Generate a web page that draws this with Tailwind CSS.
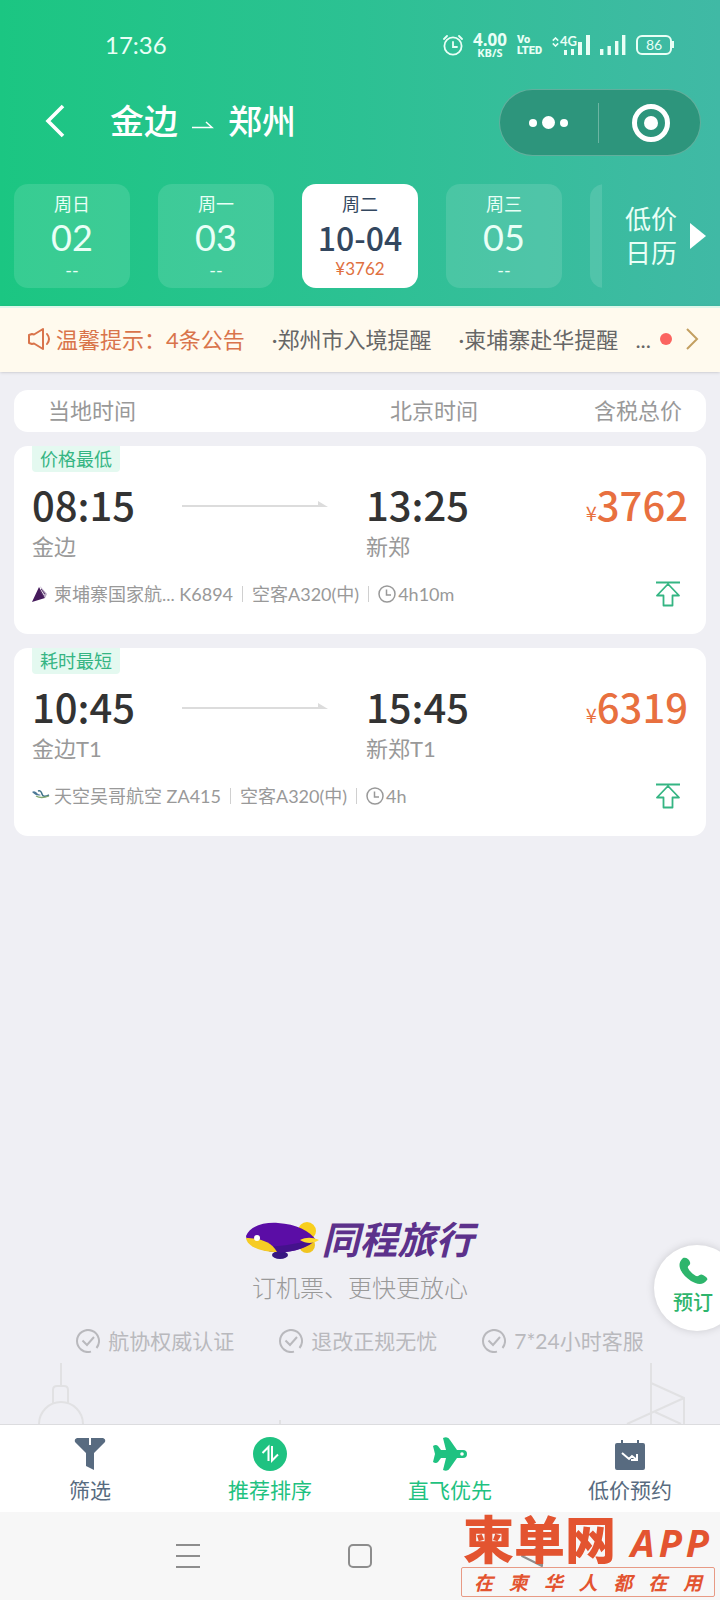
<!DOCTYPE html>
<html lang="zh-CN">
<head>
  <meta charset="UTF-8">
  <meta name="viewport" content="width=device-width, initial-scale=1.0">
  <title>金边 - 郑州</title>
  <script src="https://cdn.jsdelivr.net/npm/@tailwindcss/browser@4"></script>
</head>
<body class="relative flex min-h-screen flex-col overflow-x-hidden bg-[#efeff4] font-['Lato','Noto_Sans_CJK_SC',sans-serif] text-[#999]">

  <!-- Header -->
  <header class="bg-linear-to-r from-[#1bc682] via-[#2cc193] to-[#40b9a5] pb-[18px] text-[#e9fff6]">
    <!-- Status bar -->
    <div class="flex h-[89px] items-center justify-between pr-[46px] pl-[105px]">
      <span class="text-[24px]">17:36</span>
      <div class="flex items-center gap-[10px]">
        <svg class="h-6 w-5" viewBox="0 0 20 24" fill="none" stroke="currentColor" stroke-width="1.8" stroke-linecap="round">
          <circle cx="10" cy="13" r="8.6"/>
          <path d="M10 9v5h4M1 6l3-3M19 6l-3-3"/>
        </svg>
        <div class="flex flex-col items-center font-['Open_Sans',sans-serif] font-bold">
          <span class="text-[17px] leading-[15px]">4.00</span>
          <span class="text-[11px] leading-[11px]">KB/S</span>
        </div>
        <div class="flex flex-col font-['Roboto',sans-serif] text-[11px] leading-[11px] font-black">
          <span>Vo</span>
          <span>LTED</span>
        </div>
        <div class="flex items-start">
          <svg class="mt-[2px] h-[10px] w-[7px]" viewBox="0 0 7 10" fill="none" stroke="currentColor" stroke-width="1.6">
            <path d="M.8 3.6 3.5 1l2.7 2.6M.8 6.4 3.5 9l2.7-2.6"/>
          </svg>
          <div class="relative">
            <span class="absolute -top-[1px] left-[1px] text-[13px] leading-[14px] font-bold">4G</span>
            <svg class="h-5 w-[31px]" viewBox="0 0 31 20" fill="currentColor">
              <rect x="5" y="15" width="3" height="5"/><rect x="12" y="14" width="3" height="6"/><rect x="19" y="7" width="4" height="13"/><rect x="27" y="0" width="4" height="20"/>
            </svg>
          </div>
        </div>
        <svg class="h-5 w-[26px]" viewBox="0 0 26 20" fill="currentColor">
          <rect x="0" y="14" width="3.4" height="6"/><rect x="7.5" y="11" width="3.4" height="9"/><rect x="15" y="6" width="3.4" height="14"/><rect x="22" y="0" width="3.4" height="20"/>
        </svg>
        <div class="flex items-center">
          <span class="flex h-5 w-9 items-center justify-center rounded-[6px] border-2 border-[#e9fff6] text-[14px] leading-none">86</span>
          <span class="h-[7px] w-[2px] bg-[#e9fff6]"></span>
        </div>
      </div>
    </div>

    <!-- Title bar -->
    <div class="flex h-[67px] items-center justify-between pr-[19px] pl-[45px]">
      <div class="flex items-center pb-1">
        <button class="mr-[45px]" aria-label="返回">
          <svg class="h-[34px] w-5" viewBox="0 0 20 34" fill="none" stroke="white" stroke-width="3.6"><path d="M18 2 3 17 18 32"/></svg>
        </button>
        <h1 class="flex items-center gap-[14px] text-[34px] leading-[50px] font-medium text-white">
          <span>金边</span>
          <svg class="mt-2 h-2 w-[22px]" viewBox="0 0 22 8" fill="none" stroke="currentColor" stroke-width="1.5"><path d="M0 6.500h20L14 1"/></svg>
          <span>郑州</span>
        </h1>
      </div>
      <div class="flex h-[67px] w-[202px] items-center rounded-full border border-white/25 bg-[#2d957c]">
        <button class="flex flex-1 items-center justify-center gap-[5px]" aria-label="更多">
          <span class="size-[8px] rounded-full bg-white"></span>
          <span class="size-[13px] rounded-full bg-white"></span>
          <span class="size-[8px] rounded-full bg-white"></span>
        </button>
        <span class="h-10 w-px bg-white/30"></span>
        <button class="flex flex-1 items-center justify-center pl-1" aria-label="关闭">
          <span class="flex size-[38px] items-center justify-center rounded-full border-[5px] border-white">
            <span class="size-[14px] rounded-full bg-white"></span>
          </span>
        </button>
      </div>
    </div>

    <!-- Dates -->
    <div class="mt-7 flex items-center justify-between px-[14px]">
      <div class="flex w-[588px] gap-7 overflow-hidden">
        <button class="flex h-[104px] w-[116px] shrink-0 flex-col items-center rounded-[14px] bg-white/12 pt-[7px]">
          <span class="text-[18px] leading-[26px]">周日</span>
          <span class="text-[36px] leading-[40px]">02</span>
          <span class="text-[18px] leading-[26px]">--</span>
        </button>
        <button class="flex h-[104px] w-[116px] shrink-0 flex-col items-center rounded-[14px] bg-white/12 pt-[7px]">
          <span class="text-[18px] leading-[26px]">周一</span>
          <span class="text-[36px] leading-[40px]">03</span>
          <span class="text-[18px] leading-[26px]">--</span>
        </button>
        <button class="flex h-[104px] w-[116px] shrink-0 flex-col items-center rounded-[14px] bg-white pt-[7px] text-[#33475f]">
          <span class="text-[18px] leading-[26px]">周二</span>
          <span class="font-['Noto_Sans_CJK_SC',sans-serif] text-[32px] leading-[40px] font-medium">10-04</span>
          <span class="text-[17px] leading-[24px] text-[#e0703f]">¥3762</span>
        </button>
        <button class="flex h-[104px] w-[116px] shrink-0 flex-col items-center rounded-[14px] bg-white/12 pt-[7px]">
          <span class="text-[18px] leading-[26px]">周三</span>
          <span class="text-[36px] leading-[40px]">05</span>
          <span class="text-[18px] leading-[26px]">--</span>
        </button>
        <span class="h-[104px] w-[116px] shrink-0 rounded-[14px] bg-white/12"></span>
      </div>
      <button class="flex items-center gap-[13px]">
        <span class="w-[52px] text-[26px] leading-[34px]">低价日历</span>
        <svg class="h-[26px] w-4" viewBox="0 0 16 26" fill="white"><path d="M0 0l16 13L0 26z"/></svg>
      </button>
    </div>
  </header>

  <!-- Notice -->
  <a href="#" class="flex h-[66px] items-center border-t-2 border-[#ddf7ea] bg-[#fffaee] pr-[21px] pb-[2px] pl-[28px] text-[22px] whitespace-nowrap text-[#666] shadow-sm">
    <svg class="mr-[5px] h-[22px] w-[23px] shrink-0" viewBox="0 0 23 22" fill="none" stroke="#d9744b" stroke-width="2" stroke-linejoin="round" stroke-linecap="round">
      <path d="M4 6 1 7v8l3 1 2-.5L15 21V1L6 6.500zM19 6q4 5 0 10"/>
    </svg>
    <span class="text-[#d9744b]">温馨提示：4条公告</span>
    <span class="ml-[27px]">·郑州市入境提醒</span>
    <span class="ml-[27px]">·柬埔寨赴华提醒</span>
    <span class="ml-auto">...</span>
    <span class="mr-[13px] ml-[9px] size-3 shrink-0 rounded-full bg-[#fb6460]"></span>
    <svg class="h-[22px] w-[14px] shrink-0" viewBox="0 0 14 22" fill="none" stroke="#c39f60" stroke-width="2"><path d="M2 1l10 10L2 21"/></svg>
  </a>

  <!-- Flight list -->
  <main class="flex flex-1 flex-col gap-[14px] px-[14px] pt-[18px]">
    <div class="grid h-[42px] grid-cols-[334px_1fr_auto] items-center rounded-[14px] bg-white pr-6 pl-[34px] text-[22px] leading-[42px]">
      <span>当地时间</span>
      <span class="pl-2">北京时间</span>
      <span>含税总价</span>
    </div>

    <article class="h-[188px] rounded-[14px] bg-white px-[18px]">
      <div class="flex"><span class="h-[26px] rounded-b-[4px] bg-[#e4f9f0] px-2 text-[18px] leading-[27px] text-[#35b583]">价格最低</span></div>
      <div class="mt-[7px] grid h-[50px] grid-cols-[150px_184px_1fr_auto] items-center font-['Noto_Sans_CJK_SC',sans-serif] font-medium">
        <span class="text-[40px] leading-[50px] text-[#333]">08:15</span>
        <svg class="h-[6px] w-[146px]" viewBox="0 0 146 6" fill="#dcdcdc"><path d="M0 4h136V0l10 6H0z"/></svg>
        <span class="text-[40px] leading-[50px] text-[#333]">13:25</span>
        <span class="flex items-baseline text-[40px] leading-[50px] text-[#e8703f]"><small class="text-[20px] leading-none font-normal">¥</small>3762</span>
      </div>
      <div class="grid grid-cols-[334px_1fr] text-[22px] leading-[36px]">
        <span>金边</span>
        <span>新郑</span>
      </div>
      <div class="mt-[11px] flex h-9 items-center text-[18px] leading-[26px]">
        <svg class="mr-[7px] h-4 w-[15px]" viewBox="0 0 15 16"><path d="M7 1 13 12 0 16z" fill="#461b5c"/><path d="M8 0l7 8-2 4z" fill="#b9a9c3"/><path d="M9 3l4 5M8 5l4 6" stroke="#57336a"/></svg>
        <span>柬埔寨国家航... K6894</span>
        <span class="mx-[9px] h-4 w-px bg-[#d0d0d0]"></span>
        <span>空客A320(中)</span>
        <span class="mx-[9px] h-4 w-px bg-[#d0d0d0]"></span>
        <svg class="mr-[2px] size-[18px]" viewBox="0 0 18 18" fill="none" stroke="#999" stroke-width="1.5"><circle cx="9" cy="9" r="8"/><path d="M8.500 4.500V10H13"/></svg>
        <span>4h10m</span>
        <button class="mr-2 ml-auto" aria-label="置顶">
          <svg class="h-[26px] w-6" viewBox="0 0 24 26" fill="none" stroke="#35b583" stroke-width="1.8" stroke-linejoin="round"><path d="M0 1.500h24M12 3 1 14.500h6.500V24.500h9V14.500H23z"/></svg>
        </button>
      </div>
    </article>

    <article class="h-[188px] rounded-[14px] bg-white px-[18px]">
      <div class="flex"><span class="h-[26px] rounded-b-[4px] bg-[#e4f9f0] px-2 text-[18px] leading-[27px] text-[#35b583]">耗时最短</span></div>
      <div class="mt-[7px] grid h-[50px] grid-cols-[150px_184px_1fr_auto] items-center font-['Noto_Sans_CJK_SC',sans-serif] font-medium">
        <span class="text-[40px] leading-[50px] text-[#333]">10:45</span>
        <svg class="h-[6px] w-[146px]" viewBox="0 0 146 6" fill="#dcdcdc"><path d="M0 4h136V0l10 6H0z"/></svg>
        <span class="text-[40px] leading-[50px] text-[#333]">15:45</span>
        <span class="flex items-baseline text-[40px] leading-[50px] text-[#e8703f]"><small class="text-[20px] leading-none font-normal">¥</small>6319</span>
      </div>
      <div class="grid grid-cols-[334px_1fr] text-[22px] leading-[36px]">
        <span>金边T1</span>
        <span>新郑T1</span>
      </div>
      <div class="mt-[11px] flex h-9 items-center text-[18px] leading-[26px]">
        <svg class="mr-1 h-4 w-[18px]" viewBox="0 0 18 16" fill="none"><path d="M0 4q3-2 6 2l3 1q-4 2-9-3z" fill="#4c7897"/><path d="M6 3q3-1 4 3t7 1" stroke="#3f7389" stroke-width="1.5"/><path d="M4 8q5 3 13 0" stroke="#83aa72" stroke-width="1.3"/></svg>
        <span>天空吴哥航空 ZA415</span>
        <span class="mx-[9px] h-4 w-px bg-[#d0d0d0]"></span>
        <span>空客A320(中)</span>
        <span class="mx-[9px] h-4 w-px bg-[#d0d0d0]"></span>
        <svg class="mr-[2px] size-[18px]" viewBox="0 0 18 18" fill="none" stroke="#999" stroke-width="1.5"><circle cx="9" cy="9" r="8"/><path d="M8.500 4.500V10H13"/></svg>
        <span>4h</span>
        <button class="mr-2 ml-auto" aria-label="置顶">
          <svg class="h-[26px] w-6" viewBox="0 0 24 26" fill="none" stroke="#35b583" stroke-width="1.8" stroke-linejoin="round"><path d="M0 1.500h24M12 3 1 14.500h6.500V24.500h9V14.500H23z"/></svg>
        </button>
      </div>
    </article>
  </main>

  <!-- Brand -->
  <section class="flex flex-col items-center">
    <div class="flex items-center gap-[2px]">
      <svg class="h-[38px] w-[73px]" viewBox="0 0 73 38">
        <circle cx="61" cy="9" r="9" fill="#f8cf1c"/>
        <circle cx="61" cy="23" r="8" fill="#f0c520"/>
        <ellipse cx="34" cy="33" rx="8" ry="4" fill="#371780"/>
        <path d="M0 14C4 4 18 0 32 1c18 1 32 8 38 17-8 8-24 13-39 12C14 29 1 23 0 14z" fill="#5b0da6"/>
        <path d="M10 23c18 4 36-1 59-5-8 8-24 13-38 12-9 0-17-3-21-7z" fill="#44128c"/>
        <path d="M0 16c9 0 25 2 31 14C14 30 1 24 0 16z" fill="#f6cc24"/>
        <path d="M54 18c6-3 12-3 19 0-6 4-13 4-19 0z" fill="#ffda2e"/>
        <circle cx="11" cy="16" r="3" fill="#fff"/>
      </svg>
      <span class="pb-1 text-[38px] leading-[44px] font-bold text-[#5c318b] italic">同程旅行</span>
    </div>
    <p class="text-[24px] leading-[46px] font-light text-[#999]">订机票、更快更放心</p>
    <ul class="mt-2 flex h-[44px] items-center gap-[45px] text-[21px] text-[#b9b9bd]">
      <li class="flex items-center gap-2">
        <svg class="size-6" viewBox="0 0 24 24" fill="none" stroke="currentColor" stroke-width="2"><path d="M15 22.600A11 11 0 1 1 20.500 19M6.500 11.500l4.500 4.500 7-8"/></svg>
        航协权威认证
      </li>
      <li class="flex items-center gap-2">
        <svg class="size-6" viewBox="0 0 24 24" fill="none" stroke="currentColor" stroke-width="2"><path d="M15 22.600A11 11 0 1 1 20.500 19M6.500 11.500l4.500 4.500 7-8"/></svg>
        退改正规无忧
      </li>
      <li class="flex items-center gap-2">
        <svg class="size-6" viewBox="0 0 24 24" fill="none" stroke="currentColor" stroke-width="2"><path d="M15 22.600A11 11 0 1 1 20.500 19M6.500 11.500l4.500 4.500 7-8"/></svg>
        7*24小时客服
      </li>
    </ul>
    <!-- Skyline -->
    <div class="flex h-[61px] w-full items-end justify-between pr-[34px] pl-[38px]">
      <svg class="h-[61px] w-[46px]" viewBox="0 0 46 61" fill="none" stroke="#e1e1e3" stroke-width="2"><path d="M23 0v23M15 40V27q0-4 4-4h7q4 0 4 4v13M1 61a22 22 0 1 1 44 0"/></svg>
      <svg class="mr-[150px] h-1 w-[2px]" viewBox="0 0 2 4" fill="#e1e1e3"><rect width="2" height="4"/></svg>
      <svg class="h-[61px] w-[60px]" viewBox="0 0 60 61" fill="none" stroke="#e1e1e3" stroke-width="2"><path d="M25 0v61M25 20l33 15v26M58 35 1 61M29 49l26 12"/></svg>
    </div>
  </section>

  <!-- Booking hotline -->
  <button class="absolute -right-5 bottom-[269px] flex size-[86px] flex-col items-center rounded-full bg-white pt-3 pr-2 text-[20px] font-medium text-[#2eb56c] shadow-[0_0_8px_rgba(0,0,0,0.15)]">
    <svg class="h-7 w-[30px]" viewBox="0 0 30 28" fill="currentColor"><path d="M5 1c3-1 6 1 7 4 1 4-3 3-2 6 2 4 5 6 8 8 3 1 4-3 7-1 4 2 5 4 4 5-4 6-11 4-16 1C4 18-3 8 5 1z"/></svg>
    <span class="leading-[34px]">预订</span>
  </button>

  <!-- Toolbar -->
  <nav class="grid h-[88px] grid-cols-4 border-t border-[#dcdcdf] bg-white text-[21px] leading-[28px] text-[#586b80]">
    <button class="flex flex-col items-center pt-[11px]">
      <svg class="h-9 w-9" viewBox="0 0 36 36" fill="currentColor"><path d="M5 2h12v7h2V2h12q3 1 2 4L22 17v17l-8-4V17L3 6Q2 3 5 2z"/></svg>
      <span class="mt-1">筛选</span>
    </button>
    <button class="flex flex-col items-center pt-[11px] text-[#1fc281]">
      <svg class="h-9 w-9" viewBox="0 0 36 36"><circle cx="18" cy="18" r="17" fill="currentColor"/><path d="M10.500 17l6-6v14M20 10v14.500l6-6" fill="none" stroke="white" stroke-width="2"/></svg>
      <span class="mt-1">推荐排序</span>
    </button>
    <button class="flex flex-col items-center pt-[11px] text-[#1fc281]">
      <svg class="h-9 w-9" viewBox="0 0 36 36" fill="currentColor"><path d="M11 2q5-2 7 2l7 10h6q4 0 4 4t-4 4h-6l-7 10q-2 4-7 2l3-12H9l-3 4q-2 2-5 0l2-8-2-8q3-2 5 0l3 4h5z"/><circle cx="30" cy="18" r="1.8" fill="white"/></svg>
      <span class="mt-1">直飞优先</span>
    </button>
    <button class="flex flex-col items-center pt-[11px]">
      <svg class="h-9 w-9" viewBox="0 0 36 36" fill="currentColor"><path d="M9 4h2v3h14V4h2v3h4q2 0 2 2v23q0 2-2 2H5q-2 0-2-2V9q0-2 2-2h4z"/><path d="M10 17l7 6 3-3 5 4M25 18v6h-6" fill="none" stroke="white" stroke-width="2"/></svg>
      <span class="mt-1">低价预约</span>
    </button>
  </nav>

  <!-- System keys -->
  <footer class="relative flex h-[88px] items-center justify-center gap-[148px] bg-[#f7f7f7]">
    <button aria-label="菜单"><svg class="size-6" viewBox="0 0 24 24" stroke="#8d8d8d" stroke-width="2"><path d="M0 1h24M0 12h24M0 23h24"/></svg></button>
    <button aria-label="主页"><svg class="size-6" viewBox="0 0 24 24" fill="none" stroke="#8d8d8d" stroke-width="2"><rect x="1" y="1" width="22" height="22" rx="4"/></svg></button>
    <button aria-label="后退"><svg class="size-6" viewBox="0 0 24 24" fill="none" stroke="#8d8d8d" stroke-width="2" stroke-linejoin="round"><path d="M22 2v20L2 12z"/></svg></button>

    <!-- Watermark -->
    <div class="absolute right-[5px] bottom-[3px] w-[254px] text-[#e35430]">
      <div class="flex items-center justify-between pr-[6px] pl-[2px] leading-[50px] font-black">
        <span class="text-[51px]">柬单网</span>
        <span class="flex gap-1 pt-1 font-['Open_Sans',sans-serif] text-[38px] font-bold italic"><span>A</span><span>P</span><span>P</span></span>
      </div>
      <div class="flex h-[30px] items-center justify-between rounded-[2px] border border-[#e89a85] px-3 text-[19px] leading-none font-bold italic">
        <span>在</span><span>柬</span><span>华</span><span>人</span><span>都</span><span>在</span><span>用</span>
      </div>
    </div>
  </footer>

</body>
</html>
